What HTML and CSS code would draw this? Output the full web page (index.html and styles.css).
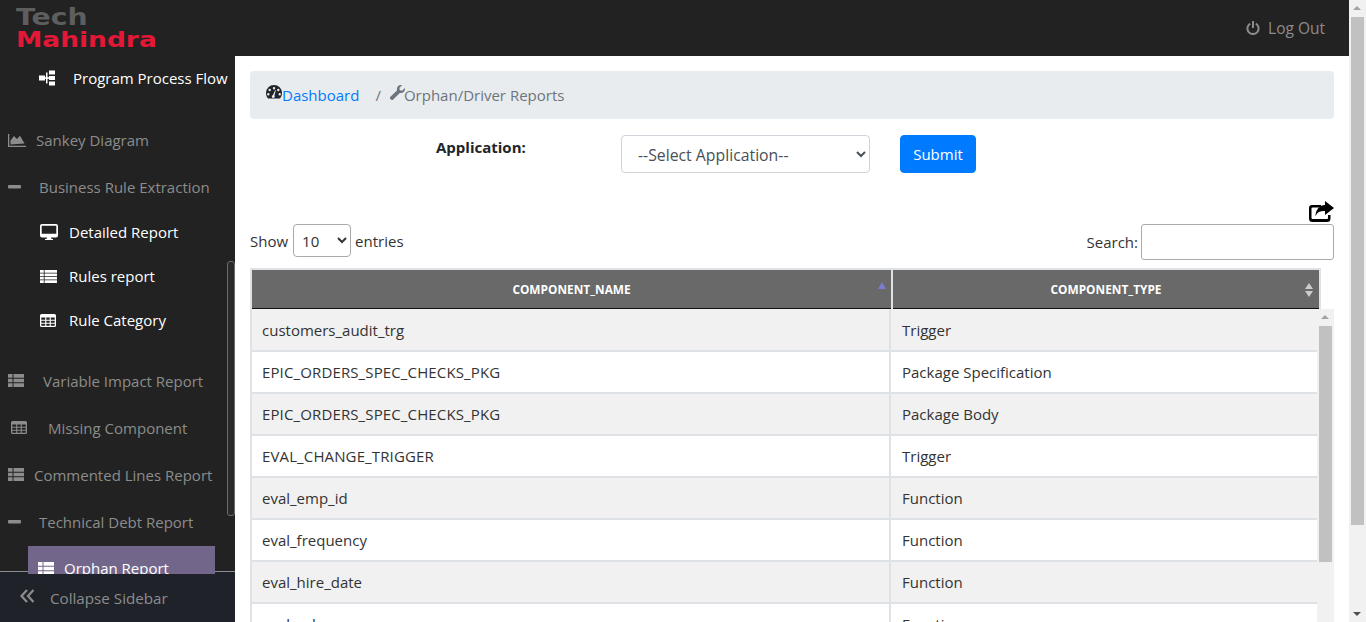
FILE: index.html
```html
<!DOCTYPE html>
<html lang="en">
<head>
    <meta charset="UTF-8">
    <title>Orphan/Driver Reports</title>
    <link rel="stylesheet" href="styles.css">
</head>
<body>
<div class="page">
    <header class="topbar">
        <div class="logo">
            <span class="logo-tech">Tech</span>
            <span class="logo-mahindra">Mahindra</span>
        </div>
        <a class="logout">
            <svg class="logout-icon" viewBox="0 0 14 14"><path d="M4.2 2.6a5.6 5.6 0 1 0 5.6 0" fill="none" stroke="currentColor" stroke-width="2"/><rect x="6" y="0" width="2" height="7" fill="currentColor"/></svg>
            Log Out
        </a>
    </header>
    <div class="body-row">
        <aside class="sidebar">
            <ul class="menu">
                <li class="item sub first">
                    <span class="icon icon-flow"><svg viewBox="0 0 16 16" width="16" height="16" fill="#fff"><rect x="0" y="5.5" width="6" height="5"/><rect x="6" y="7.2" width="5" height="1.6"/><rect x="7" y="2.5" width="1.5" height="11"/><rect x="10" y="0.5" width="6" height="4"/><rect x="10" y="6" width="6" height="4"/><rect x="10" y="11.5" width="6" height="4"/></svg></span>
                    Program Process Flow
                </li>
                <li class="item top sankey">
                    <span class="icon icon-sankey"><svg viewBox="0 0 18 14" width="18" height="14" fill="#8c8c8c"><path d="M0 1h1.3v11.7H18V14H0z"/><path d="M2.5 11.5V7.5L6 3l3 3 3-3.2 4.5 7.7z"/></svg></span>
                    Sankey Diagram
                </li>
                <li class="item top">
                    <span class="icon icon-minus"><svg viewBox="0 0 13 4" width="13" height="4"><rect width="13" height="3.4" rx="1" fill="#8c8c8c"/></svg></span>
                    Business Rule Extraction
                </li>
                <li class="item sub">
                    <span class="icon icon-sub"><svg viewBox="0 0 18 16" width="18" height="16" fill="#fff"><path d="M2 0h14a2 2 0 0 1 2 2v9.5a2 2 0 0 1-2 2h-5l.5 1.5H13v1H5v-1h1.500L7 13.500H2a2 2 0 0 1-2-2V2a2 2 0 0 1 2-2zm-.300 1.700v8h14.600v-8z"/></svg></span>
                    Detailed Report
                </li>
                <li class="item sub">
                    <span class="icon icon-sub"><svg viewBox="0 0 17 13" width="17" height="13" fill="#fff"><path d="M0 0h17v2.700H0zM0 3.400h17v2.700H0zM0 6.800h17v2.700H0zM0 10.200h17V13H0z"/><path d="M3.800 0h.8v13h-.8z" fill="#222"/></svg></span>
                    Rules report
                </li>
                <li class="item sub">
                    <span class="icon icon-sub"><svg viewBox="0 0 16 13" width="16" height="13"><use href="#grid" fill="#fff"/></svg></span>
                    Rule Category
                </li>
                <li class="item top after-sub">
                    <span class="icon icon-variable"><svg viewBox="0 0 16 13" width="16" height="13"><use href="#thlist" fill="#8c8c8c"/></svg></span>
                    Variable Impact Report
                </li>
                <li class="item top">
                    <span class="icon icon-missing"><svg viewBox="0 0 16 13" width="16" height="13"><use href="#grid" fill="#8c8c8c"/></svg></span>
                    Missing Component
                </li>
                <li class="item top">
                    <span class="icon icon-commented"><svg viewBox="0 0 16 13" width="16" height="13"><use href="#thlist" fill="#8c8c8c"/></svg></span>
                    Commented Lines Report
                </li>
                <li class="item top">
                    <span class="icon icon-minus"><svg viewBox="0 0 13 4" width="13" height="4"><rect width="13" height="3.4" rx="1" fill="#8c8c8c"/></svg></span>
                    Technical Debt Report
                </li>
                <li class="item active">
                    <span class="icon icon-active"><svg viewBox="0 0 16 13" width="16" height="13"><use href="#thlist" fill="#fff"/></svg></span>
                    Orphan Report
                </li>
            </ul>
            <div class="menu-scroll"></div>
            <div class="collapse">
                <svg class="collapse-icon" viewBox="0 0 15 14" width="15" height="14"><path d="M7 1 1.500 7 7 13M13.500 1 8 7l5.500 6" fill="none" stroke="#8c8c8c" stroke-width="2.200"/></svg>
                Collapse Sidebar
            </div>
        </aside>
        <main class="content">
            <nav class="crumbs">
                <svg class="crumb-icon" viewBox="0 0 16 14" width="16" height="14"><path fill-rule="evenodd" d="M8 0a8 8 0 0 1 8 8c0 2.200-.7 4-2 5.500H2C.7 12 0 10.200 0 8a8 8 0 0 1 8-8zM8 2a1.200 1.200 0 1 0 0 2.400A1.200 1.200 0 0 0 8 2zM3.700 3.800a1.200 1.200 0 1 0 0 2.400 1.200 1.200 0 0 0 0-2.400zM12.300 3.800a1.200 1.200 0 1 0 0 2.400 1.200 1.200 0 0 0 0-2.400zM2.300 8a1.200 1.200 0 1 0 0 2.400 1.200 1.200 0 0 0 0-2.400zM13.700 8a1.200 1.200 0 1 0 0 2.400 1.200 1.200 0 0 0 0-2.400zM9.200 5 7 10a1.500 1.500 0 1 0 1.500.6l1.300-5.400z" fill="#212529"/></svg>
                <a class="crumb-link">Dashboard</a>
                <span class="crumb-sep">/</span>
                <svg class="crumb-icon wrench" viewBox="0 0 16 16" width="15" height="15"><path d="M15.700 3.200c.5 1.500.1 3.200-1.100 4.300-1.100 1-2.700 1.400-4.100.9L3.400 15.500a1.700 1.700 0 0 1-2.400 0l-.5-.5a1.700 1.700 0 0 1 0-2.400l7.100-7.100C7.100 4.100 7.500 2.500 8.500 1.400 9.600.2 11.300-.2 12.800.3L10 3.100l.5 2.400 2.400.5z" fill="#6c757d"/></svg>
                <span class="crumb-current">Orphan/Driver Reports</span>
            </nav>
            <form class="app-form">
                <label class="app-label">Application:</label>
                <select class="app-select"><option>--Select Application--</option></select>
                <button class="submit" type="button">Submit</button>
            </form>
            <div class="export-row">
                <svg viewBox="0 0 25 21" width="25" height="21"><path d="M3 4h9v2.500H3.500a1 1 0 0 0-1 1V17a1 1 0 0 0 1 1H18a1 1 0 0 0 1-1v-3h2.500v3.500A3.500 3.500 0 0 1 18 21H3.500A3.500 3.500 0 0 1 0 17.500V7a3 3 0 0 1 3-3z" fill="#000"/><path d="M16 0l9 7-9 7v-4C11 10 8 11 6.500 15.500 6.500 9 10 4.500 16 4z" fill="#000"/></svg>
            </div>
            <div class="table-tools">
                <label class="tool">Show <select class="len"><option>10</option></select> entries</label>
                <label class="tool">Search:<input class="search" type="text"></label>
            </div>
            <table class="head-table">
                <tr>
                    <th class="col-a">COMPONENT_NAME<span class="sort sort-asc"></span></th>
                    <th class="col-b">COMPONENT_TYPE<span class="sort"></span></th>
                </tr>
            </table>
            <div class="table-scroll">
                <table class="rows">
                    <tr><td class="col-a">customers_audit_trg</td><td>Trigger</td></tr>
                    <tr><td class="col-a upper">EPIC_ORDERS_SPEC_CHECKS_PKG</td><td>Package Specification</td></tr>
                    <tr><td class="col-a upper">EPIC_ORDERS_SPEC_CHECKS_PKG</td><td>Package Body</td></tr>
                    <tr><td class="col-a upper">EVAL_CHANGE_TRIGGER</td><td>Trigger</td></tr>
                    <tr><td class="col-a">eval_emp_id</td><td>Function</td></tr>
                    <tr><td class="col-a">eval_frequency</td><td>Function</td></tr>
                    <tr><td class="col-a">eval_hire_date</td><td>Function</td></tr>
                    <tr><td class="col-a">eval_sal</td><td>Function</td></tr>
                </table>
                <div class="inner-bar">
                    <span class="arrow-up"></span>
                    <span class="inner-thumb"></span>
                </div>
            </div>
        </main>
    </div>
    <div class="page-bar">
        <span class="arrow-up"></span>
        <span class="page-thumb"></span>
        <span class="arrow-down"></span>
    </div>
</div>
<svg class="defs" width="0" height="0">
    <symbol id="grid" viewBox="0 0 16 13"><path fill-rule="evenodd" d="M1.500 0h13A1.500 1.500 0 0 1 16 1.500v10a1.500 1.500 0 0 1-1.500 1.500h-13A1.500 1.500 0 0 1 0 11.500v-10A1.500 1.500 0 0 1 1.500 0zM1.300 3.500v2.200h3.900V3.500zm5 0v2.200h3.400V3.500zm4.500 0v2.200h3.900V3.500zM1.300 6.700v2h3.900v-2zm5 0v2h3.400v-2zm4.500 0v2h3.900v-2zM1.300 9.700v2h3.900v-2zm5 0v2h3.400v-2zm4.500 0v2h3.900v-2z"/></symbol>
    <symbol id="thlist" viewBox="0 0 16 13"><path d="M0 0h4.500v3.700H0zM5.500 0H16v3.700H5.500zM0 4.700h4.500v3.600H0zM5.500 4.700H16v3.600H5.500zM0 9.300h4.500V13H0zM5.500 9.300H16V13H5.500z"/></symbol>
</svg>
</body>
</html>
```

FILE: styles.css
```css
* {
    box-sizing: border-box;
    padding: 0;
    margin: 0;
    list-style: none;
}

html, body {
    height: 622px;
    overflow: hidden;
}

body {
    font-family: "Open Sans", "Noto Sans", sans-serif;
    font-size: 15px;
    color: #212529;
    background: #fff;
}

.defs {
    position: absolute;
}

.page {
    width: 1366px;
    height: 622px;
    position: relative;
    padding-right: 17px;
    overflow: hidden;
}

/* top bar */
.topbar {
    height: 56px;
    background: #222;
    display: flex;
    justify-content: space-between;
    align-items: center;
    padding: 0 24px 0 16px;
}

.logo {
    display: flex;
    flex-direction: column;
    font-family: "DejaVu Sans", sans-serif;
    font-weight: bold;
}

.logo-tech {
    color: #5e5e5e;
    font-size: 23px;
    line-height: 23px;
    height: 24px;
    transform: scaleX(1.23);
    transform-origin: left center;
}

.logo-mahindra {
    color: #e31837;
    font-size: 21px;
    line-height: 20px;
    height: 20px;
    transform: scaleX(1.26);
    transform-origin: left center;
}

.logout {
    display: flex;
    align-items: center;
    gap: 8px;
    color: #8c8c8c;
    font-size: 15.5px;
}

.logout-icon {
    width: 14px;
    height: 14px;
}

.body-row {
    display: flex;
    height: 566px;
}

/* sidebar */
.sidebar {
    width: 235px;
    flex: none;
    background: #222;
    position: relative;
}

.menu {
    height: 518px;
    overflow: hidden;
    position: relative;
    z-index: 2;
}

.item {
    display: flex;
    align-items: center;
    font-size: 15px;
    white-space: nowrap;
}

.icon {
    display: flex;
    align-items: center;
    flex: none;
}

.top {
    height: 47px;
    padding-left: 8px;
    color: #8c8c8c;
}

.sub {
    height: 44px;
    padding-left: 40px;
    color: #fff;
}

.first {
    padding-left: 39px;
    margin-bottom: 17px;
}

.sankey {
    height: 46px;
}

.after-sub {
    margin-top: 15px;
}

.icon-flow { width: 34px; }
.icon-sankey { width: 28px; }
.icon-minus { width: 31px; }
.icon-sub { width: 29px; }
.icon-variable { width: 35px; }
.icon-missing { width: 37px; margin-left: 3px; }
.icon-commented { width: 26px; }
.icon-active { width: 26px; }

.active {
    height: 28px;
    margin-left: 28px;
    width: 187px;
    margin-top: 1px;
    padding: 8px 0 0 10px;
    align-items: flex-start;
    background: #72668a;
    color: #fff;
    line-height: 28px;
    overflow: hidden;
}

.active .icon {
    height: 28px;
}

.menu-scroll {
    position: absolute;
    left: 227px;
    top: 205px;
    width: 8px;
    height: 255px;
    border: 1px solid #6a6a6a;
    border-radius: 3px;
    background: #2a2a2a;
}

.collapse {
    position: absolute;
    left: 0;
    right: 0;
    bottom: 0;
    height: 51px;
    border-top: 1px solid #8a8f94;
    background: #1f2329;
    color: #8c8c8c;
    display: flex;
    align-items: center;
    padding: 2px 0 0 20px;
    gap: 15px;
    font-size: 15.2px;
}

.collapse-icon {
    margin-top: -4px;
}

/* main */
.content {
    flex: 1;
    padding: 15px 15px 0;
    min-width: 0;
}

.crumbs {
    height: 48px;
    background: #e9ecef;
    border-radius: 4px;
    display: flex;
    align-items: center;
    padding-left: 16px;
}

.crumb-icon {
    flex: none;
    margin-top: -6px;
}

.crumb-link {
    color: #007bff;
}

.crumb-sep {
    color: #6c757d;
    margin: 0 8px 0 16px;
}

.wrench {
    margin-left: 1px;
}

.crumb-current {
    color: #6c757d;
    margin-left: -1px;
}

.app-form {
    display: flex;
    align-items: flex-start;
    padding: 16px 0 0 186px;
    height: 82px;
}

.app-label {
    width: 185px;
    font-weight: bold;
    padding-top: 2px;
}

.app-select {
    width: 249px;
    height: 38px;
    padding: 2px 0 0 12px;
    font: inherit;
    font-size: 15.8px;
    color: #495057;
    background: #fff;
    border: 1px solid #ced4da;
    border-radius: 4px;
}

.submit {
    margin-left: 30px;
    width: 76px;
    height: 38px;
    font: inherit;
    color: #fff;
    background: #007bff;
    border: 1px solid #007bff;
    border-radius: 4px;
}

.export-row {
    display: flex;
    justify-content: flex-end;
    height: 23px;
}

.table-tools {
    display: flex;
    justify-content: space-between;
    align-items: flex-start;
    height: 44px;
}

.tool {
    display: flex;
    align-items: center;
    gap: 5px;
    color: #333;
    font-size: 15px;
    height: 36px;
}

.tool:first-child {
    height: 33px;
}

.len {
    width: 58px;
    height: 33px;
    margin-right: -1px;
    padding-left: 4px;
    font: inherit;
    color: #333;
    background: #fff;
    border: 1px solid #aaa;
    border-radius: 4px;
}

.search {
    width: 193px;
    height: 36px;
    border: 1px solid #aaa;
    border-radius: 3px;
    margin-left: -2px;
}

/* table */
.head-table {
    width: 1071px;
    height: 41px;
    border-collapse: collapse;
    table-layout: fixed;
    border: 2px solid #dee2e6;
    border-bottom: 0;
}

.head-table th {
    height: 39px;
    background: #696969;
    color: #fff;
    font-size: 11.85px;
    font-weight: bold;
    border-bottom: 1px solid #111;
    position: relative;
}

.head-table .col-a {
    width: 641px;
    border-right: 2px solid #dee2e6;
}

.sort {
    position: absolute;
    right: 6px;
    top: 13px;
    border-left: 4px solid transparent;
    border-right: 4px solid transparent;
    border-bottom: 6px solid #ccc;
}

.sort::after {
    content: "";
    position: absolute;
    left: -4px;
    top: 8px;
    border-left: 4px solid transparent;
    border-right: 4px solid transparent;
    border-top: 6px solid #ccc;
}

.sort-asc {
    right: 5px;
    top: 12px;
    border-left-width: 4.5px;
    border-right-width: 4.5px;
    border-bottom: 7px solid #7b7bd0;
}

.sort-asc::after {
    display: none;
}

.table-scroll {
    position: relative;
    height: 313px;
    width: 1084px;
    overflow: hidden;
}

.rows {
    width: 1067px;
    border-collapse: collapse;
    table-layout: fixed;
}

.rows td {
    height: 42px;
    padding: 0 10px 0 11px;
    color: #333;
    font-size: 15px;
    border-bottom: 2px solid #dee2e6;
}

.rows tr:nth-child(odd) td {
    background: #f1f1f1;
}

.rows td.col-a {
    width: 639px;
    padding-left: 10px;
    border-left: 2px solid #dee2e6;
    border-right: 2px solid #dee2e6;
}

.rows td.upper {
    letter-spacing: 0.13px;
}

.inner-bar, .page-bar {
    position: absolute;
    top: 0;
    right: 0;
    width: 17px;
    height: 100%;
    background: #f1f1f1;
}

.inner-thumb, .page-thumb {
    position: absolute;
    left: 2px;
    width: 13px;
    background: #c1c1c1;
}

.inner-thumb {
    top: 17px;
    height: 236px;
}

.page-thumb {
    top: 17px;
    height: 508px;
}

.arrow-up, .arrow-down {
    position: absolute;
    left: 4px;
    border-left: 4.5px solid transparent;
    border-right: 4.500px solid transparent;
}

.arrow-up {
    top: 6px;
    border-bottom: 4.500px solid #a3a3a3;
}

.arrow-down {
    bottom: 6px;
    border-top: 4.500px solid #505050;
}
```
